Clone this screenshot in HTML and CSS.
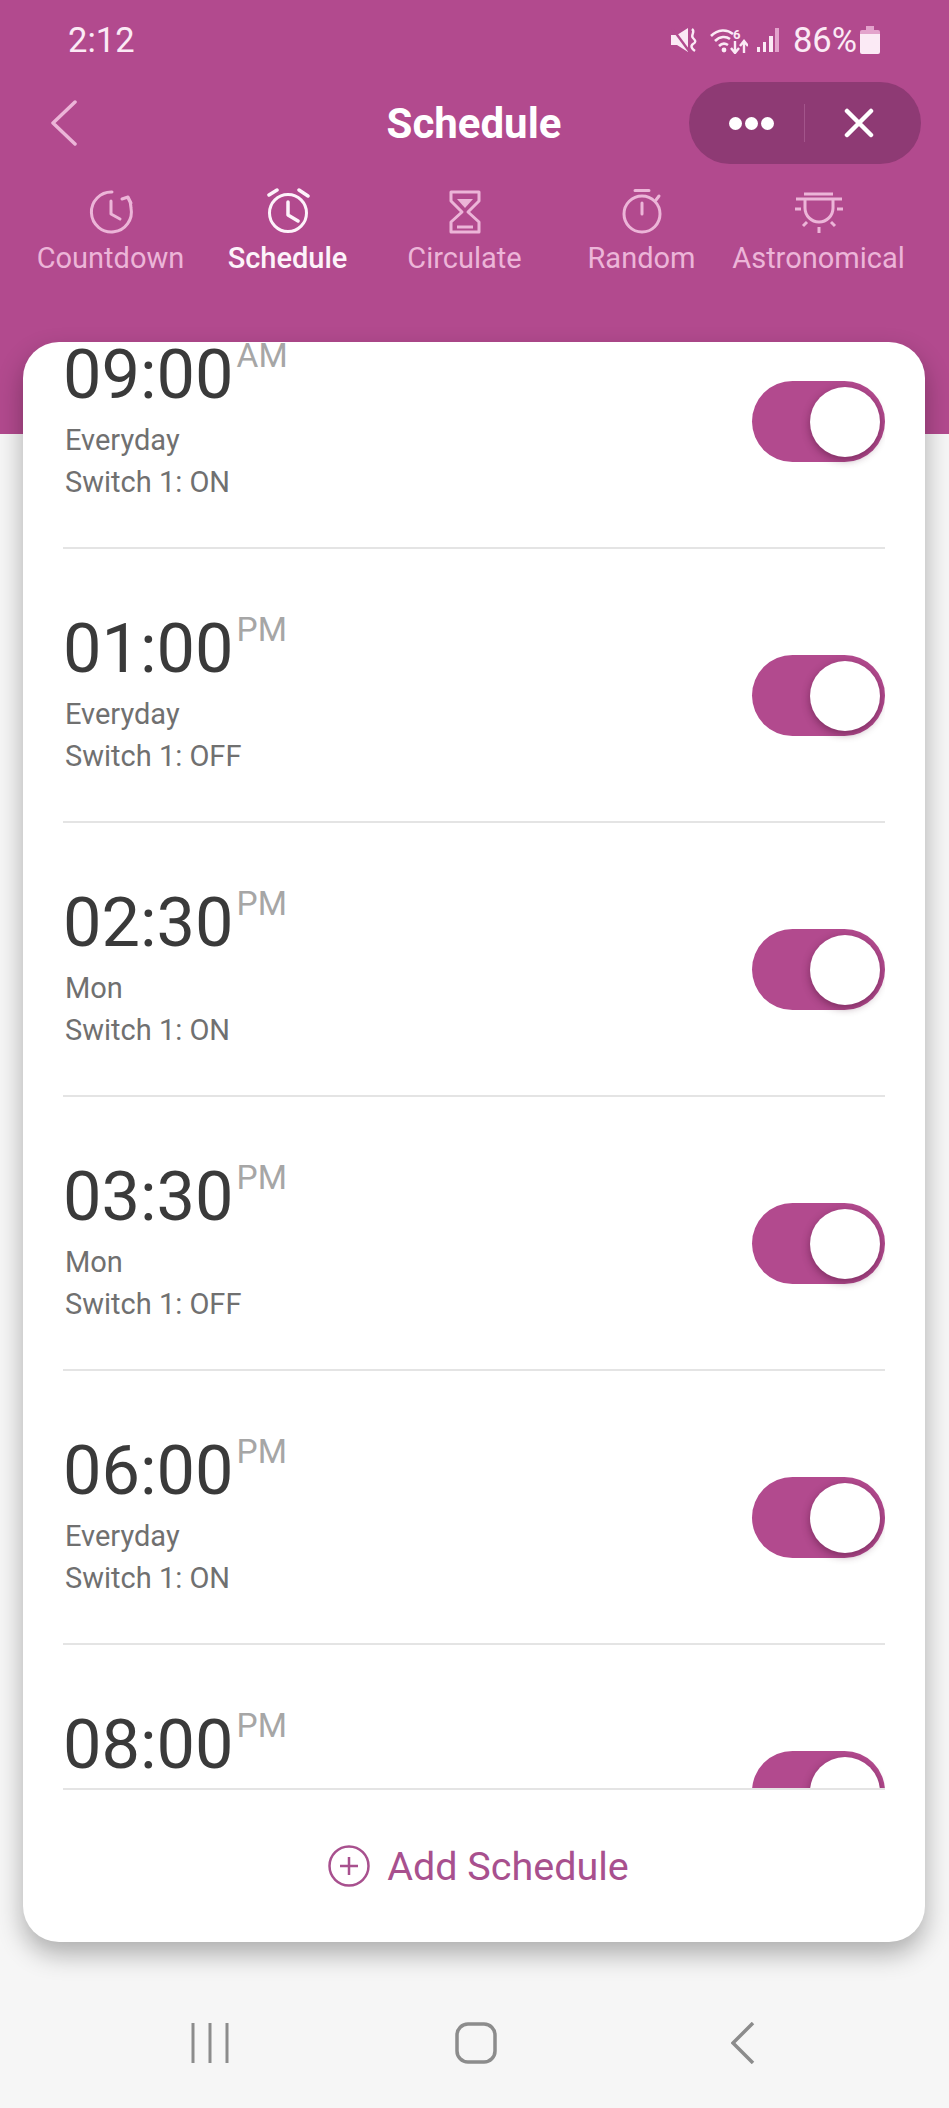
FILE: index.html
```html
<!DOCTYPE html>
<html lang="en">
<head>
    <meta charset="UTF-8">
    <meta name="viewport" content="width=device-width, initial-scale=1.0">
    <title>Schedule</title>
    <link rel="stylesheet" href="styles.css">
</head>
<body>
    <div class="screen">
        <div class="header">
            <div class="status-bar">
                <span class="clock">2:12</span>
                <div class="status-icons">
                    <svg class="ico-mute" width="26" height="24" viewBox="0 0 26 24"><path d="M0 7h6l11-7v24L6 17H0z" fill="#fbeaf5"/><path d="M1 0l17 23" stroke="#b24a8e" stroke-width="2.4"/><path d="M21 1c4 3-2 6 1 9s3 4 0 6-1 5 2 7" fill="none" stroke="#fbeaf5" stroke-width="2.4"/></svg>
                    <svg class="ico-wifi" width="38" height="28" viewBox="0 0 38 28"><path d="M1 10c7-7 16-7 22-2M5 15c5-5 11-5 15-2M9 20c3-3 6-3 9-1" fill="none" stroke="#fbeaf5" stroke-width="2.6"/><circle cx="14" cy="24" r="2.4" fill="#fbeaf5"/><text x="23" y="12.5" class="wifi-six">6</text><path d="M25 15v12M21 22l4 5 4-5M34 27V15M30 20l4-5 4 5" fill="none" stroke="#fbeaf5" stroke-width="2.4"/></svg>
                    <svg class="ico-signal" width="24" height="26" viewBox="0 0 24 26"><path d="M1 20h3v5H1zM7 15h3v10H7zM13 9h4v16h-4z" fill="#fbeaf5"/><path d="M19 1h4v24h-4z" fill="#e3a3cc"/></svg>
                    <span class="battery-text">86%</span>
                    <svg class="ico-battery" width="20" height="28" viewBox="0 0 20 28"><path d="M6 0h8v4H6z" fill="#e3a3cc"/><path d="M2 4h16a2 2 0 0 1 2 2v3H0V6a2 2 0 0 1 2-2z" fill="#e3a3cc"/><path d="M0 8h20v18a2 2 0 0 1-2 2H2a2 2 0 0 1-2-2z" fill="#fbeaf5"/></svg>
                </div>
            </div>

            <div class="title-bar">
                <svg class="back-btn" width="28" height="46" viewBox="0 0 28 46"><path d="M25 2L3 23l22 21" fill="none" stroke="#ecb5d8" stroke-width="3.5" stroke-linecap="round" stroke-linejoin="round"/></svg>
                <h1 class="title">Schedule</h1>
                <div class="pill">
                    <div class="dots"><span></span><span></span><span></span></div>
                    <div class="pill-line"></div>
                    <svg width="30" height="30" viewBox="0 0 30 30"><path d="M3 3l24 24M27 3L3 27" stroke="#fff" stroke-width="4.5" stroke-linecap="round"/></svg>
                </div>
            </div>

            <div class="tabs">
                <div class="tab">
                    <svg width="48" height="48" viewBox="0 0 48 48"><path d="M25 4A20 20 0 1 0 44 20c0-4-1-7-3-10M35 11l6-2 3 6M24 13v13l9 5" fill="none" stroke="currentColor" stroke-width="3" stroke-linecap="round" stroke-linejoin="round"/></svg>
                    <span>Countdown</span>
                </div>
                <div class="tab active">
                    <svg width="48" height="48" viewBox="0 0 48 48"><circle cx="24" cy="25" r="18.5" fill="none" stroke="currentColor" stroke-width="3"/><path d="M24 14v13l10 6M5 7l8-5M35 2l9 6" fill="none" stroke="currentColor" stroke-width="3.5" stroke-linecap="round" stroke-linejoin="round"/></svg>
                    <span>Schedule</span>
                </div>
                <div class="tab">
                    <svg width="48" height="48" viewBox="0 0 48 48"><path d="M10 4h28v9L27 24l11 10v10H10V34l11-10-11-11z" fill="none" stroke="currentColor" stroke-width="3" stroke-linejoin="round"/><path d="M16 11h16l-8 9z" fill="currentColor"/><path d="M16 39h16" stroke="currentColor" stroke-width="3"/></svg>
                    <span>Circulate</span>
                </div>
                <div class="tab">
                    <svg width="48" height="48" viewBox="0 0 48 48"><circle cx="24" cy="26" r="18" fill="none" stroke="currentColor" stroke-width="3"/><path d="M17 2.5h14M24 15v11M38 12l3-4" fill="none" stroke="currentColor" stroke-width="3" stroke-linecap="round"/></svg>
                    <span>Random</span>
                </div>
                <div class="tab">
                    <svg width="48" height="48" viewBox="0 0 48 48"><path d="M9 6h29M1 11h46M10 12v8a14 14 0 0 0 28 0v-8M0 21h6M42 21h6M8 38l4-4M36 34l4 4M24 39v6" fill="none" stroke="currentColor" stroke-width="3"/></svg>
                    <span>Astronomical</span>
                </div>
            </div>
        </div>

        <div class="card">
            <div class="list">
                <div class="list-inner">
                    <div class="row">
                        <div class="row-text">
                            <div class="time">09:00<sup class="ampm">AM</sup></div>
                            <div class="sub">Everyday</div>
                            <div class="sub">Switch 1: ON</div>
                        </div>
                        <div class="toggle"><div class="knob"></div></div>
                    </div>
                    <div class="row">
                        <div class="row-text">
                            <div class="time">01:00<sup class="ampm">PM</sup></div>
                            <div class="sub">Everyday</div>
                            <div class="sub">Switch 1: OFF</div>
                        </div>
                        <div class="toggle"><div class="knob"></div></div>
                    </div>
                    <div class="row">
                        <div class="row-text">
                            <div class="time">02:30<sup class="ampm">PM</sup></div>
                            <div class="sub">Mon</div>
                            <div class="sub">Switch 1: ON</div>
                        </div>
                        <div class="toggle"><div class="knob"></div></div>
                    </div>
                    <div class="row">
                        <div class="row-text">
                            <div class="time">03:30<sup class="ampm">PM</sup></div>
                            <div class="sub">Mon</div>
                            <div class="sub">Switch 1: OFF</div>
                        </div>
                        <div class="toggle"><div class="knob"></div></div>
                    </div>
                    <div class="row">
                        <div class="row-text">
                            <div class="time">06:00<sup class="ampm">PM</sup></div>
                            <div class="sub">Everyday</div>
                            <div class="sub">Switch 1: ON</div>
                        </div>
                        <div class="toggle"><div class="knob"></div></div>
                    </div>
                    <div class="row">
                        <div class="row-text">
                            <div class="time">08:00<sup class="ampm">PM</sup></div>
                        </div>
                        <div class="toggle"><div class="knob"></div></div>
                    </div>
                </div>
            </div>
            <div class="add-row">
                <svg width="42" height="42" viewBox="0 0 42 42"><circle cx="21" cy="21" r="19.5" fill="none" stroke="#a8508e" stroke-width="2.5"/><path d="M21 12v18M12 21h18" stroke="#a8508e" stroke-width="2.5"/></svg>
                <span>Add Schedule</span>
            </div>
        </div>

        <div class="nav-bar">
            <svg width="38" height="40" viewBox="0 0 38 40"><path d="M2 0v40M19 0v40M36 0v40" stroke="#8c8c8c" stroke-width="3"/></svg>
            <svg class="nav-home" width="42" height="42" viewBox="0 0 42 42"><rect x="2" y="2" width="38" height="38" rx="11" fill="none" stroke="#8c8c8c" stroke-width="3.5"/></svg>
            <svg width="24" height="42" viewBox="0 0 24 42"><path d="M22 1L2 21l20 20" fill="none" stroke="#8c8c8c" stroke-width="3.5"/></svg>
        </div>
    </div>
</body>
</html>
```

FILE: styles.css
```css
* {
    box-sizing: border-box;
}
body {
    margin: 0;
    font-family: Roboto, "Liberation Sans", sans-serif;
    background-color: #f6f6f6;
}
.screen {
    width: 949px;
    height: 2108px;
    overflow: hidden;
}
.header {
    height: 434px;
    background-color: #b24a8e;
}
.status-bar {
    height: 82px;
    padding: 20px 69px 0 68px;
    display: flex;
    justify-content: space-between;
    align-items: flex-start;
    color: #fbeaf5;
}
.clock {
    font-size: 34.5px;
    line-height: 40px;
}
.status-icons {
    display: flex;
    align-items: center;
    height: 40px;
}
.ico-wifi {
    margin-left: 13px;
}
.ico-signal {
    margin-left: 8px;
}
.wifi-six {
    font-size: 13px;
    font-weight: 700;
    fill: #fbeaf5;
}
.battery-text {
    font-size: 34.5px;
    line-height: 40px;
    margin-left: 13px;
    margin-right: 3px;
}
.title-bar {
    height: 82px;
    padding: 0 28px 0 27px;
    display: grid;
    grid-template-columns: minmax(0, 1fr) auto minmax(0, 1fr);
    align-items: center;
}
.back-btn {
    margin-left: 23px;
}
.title {
    margin: 0;
    font-size: 42px;
    font-weight: 700;
    color: #fff;
}
.pill {
    justify-self: end;
    width: 232px;
    height: 82px;
    border-radius: 41px;
    background-color: #8e3a74;
    display: flex;
    align-items: center;
    padding-left: 40px;
}
.dots {
    display: flex;
    gap: 3px;
    width: 75px;
}
.dots span {
    width: 13px;
    height: 13px;
    border-radius: 50%;
    background-color: #fff;
}
.pill-line {
    width: 1px;
    height: 38px;
    background-color: #a3558b;
    margin-right: 39px;
}
.tabs {
    padding: 24px 22px 0;
    display: grid;
    grid-template-columns: repeat(5, 177px);
}
.tab {
    display: flex;
    flex-direction: column;
    align-items: center;
    color: #ecb5d8;
    font-size: 29px;
    white-space: nowrap;
}
.tab span {
    line-height: 40px;
    margin-top: 2px;
}
.tab.active {
    color: #fdf3fa;
    font-weight: 500;
}
.card {
    margin: -92px 24px 0 23px;
    height: 1600px;
    background: #fff;
    border-radius: 36px;
    box-shadow: 0 12px 26px rgba(0, 0, 0, 0.3);
    position: relative;
}
.list {
    height: 1448px;
    margin: 0 40px;
    overflow: hidden;
    border-bottom: 2px solid #e4e4e4;
}
.list-inner {
    margin-top: -67px;
}
.row {
    height: 274px;
    border-bottom: 2px solid #e4e4e4;
    padding-top: 106px;
    display: flex;
    justify-content: space-between;
    align-items: flex-start;
}
.row-text {
    margin-top: -46px;
}
.time {
    font-size: 68.5px;
    font-weight: 400;
    line-height: 80px;
    color: #3a3a3a;
    display: flex;
    align-items: flex-start;
    height: 84px;
}
.ampm {
    font-size: 33.5px;
    line-height: 38px;
    margin-top: 2px;
    color: #a6a6a6;
    font-weight: 400;
    margin-left: 3px;
}
.sub {
    font-size: 29px;
    line-height: 42px;
    color: #707070;
    padding-left: 2px;
}
.toggle {
    width: 133px;
    height: 81px;
    border-radius: 41px;
    background-color: #b24a8e;
    flex-shrink: 0;
    padding: 6px 5px 0 0;
    display: flex;
    justify-content: flex-end;
}
.knob {
    width: 70px;
    height: 70px;
    border-radius: 50%;
    background-color: #fff;
    box-shadow: 0 3px 8px rgba(60, 10, 40, 0.45);
}
.add-row {
    height: 152px;
    padding-left: 9px;
    display: flex;
    justify-content: center;
    align-items: center;
    gap: 17px;
    color: #a8508e;
    font-size: 39.5px;
}
.nav-bar {
    margin-top: 80px;
    padding: 0 194px 0 191px;
    display: flex;
    justify-content: space-between;
    align-items: center;
}
.nav-home {
    margin-right: 8px;
}
```
